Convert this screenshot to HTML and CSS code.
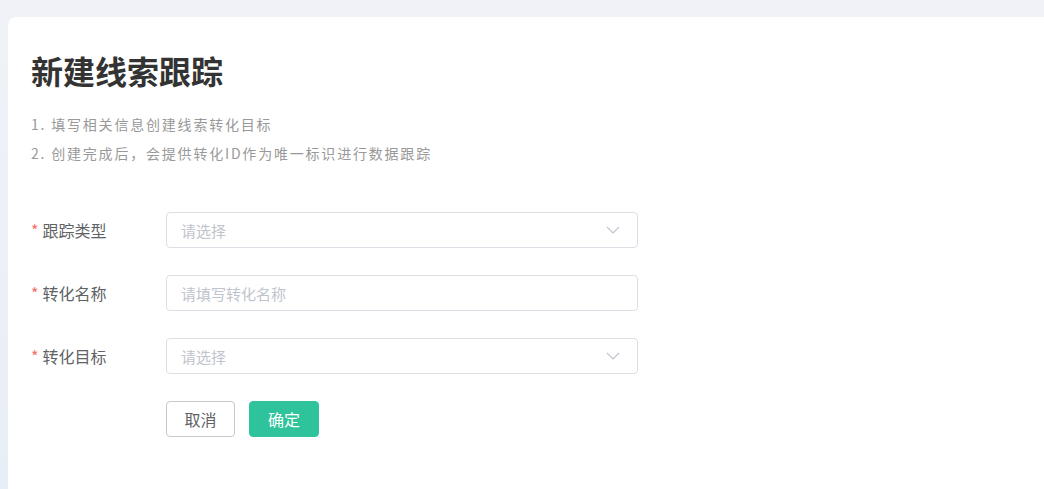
FILE: index.html
```html
<!DOCTYPE html>
<html lang="zh-CN">
<head>
<meta charset="utf-8">
<title>新建线索跟踪</title>
<link rel="stylesheet" href="styles.css">
</head>
<body>
<div class="card">
  <h1 class="title">新建线索跟踪</h1>
  <div class="desc">
    <p>1. 填写相关信息创建线索转化目标</p>
    <p>2. 创建完成后，会提供转化ID作为唯一标识进行数据跟踪</p>
  </div>
  <form class="form">
    <div class="row">
      <label class="label"><span class="req">*</span>跟踪类型</label>
      <div class="control select">
        <span class="placeholder">请选择</span>
        <svg class="arrow" width="14" height="8" viewBox="0 0 14 8"><path d="M1 1l6 6 6-6" fill="none" stroke="#c0c4cc" stroke-width="1.2"/></svg>
      </div>
    </div>
    <div class="row">
      <label class="label"><span class="req">*</span>转化名称</label>
      <div class="control">
        <span class="placeholder">请填写转化名称</span>
      </div>
    </div>
    <div class="row">
      <label class="label"><span class="req">*</span>转化目标</label>
      <div class="control select">
        <span class="placeholder">请选择</span>
        <svg class="arrow" width="14" height="8" viewBox="0 0 14 8"><path d="M1 1l6 6 6-6" fill="none" stroke="#c0c4cc" stroke-width="1.2"/></svg>
      </div>
    </div>
    <div class="row actions">
      <button type="button" class="btn btn-cancel">取消</button>
      <button type="button" class="btn btn-ok">确定</button>
    </div>
  </form>
</div>
</body>
</html>
```

FILE: styles.css
```css
html, body {
  margin: 0;
  height: 100%;
}
body {
  background: linear-gradient(180deg, #f0f2f7 0%, #e8eef7 100%);
  font-family: "Noto Sans CJK SC", "Noto Sans", sans-serif;
  overflow: hidden;
}
.card {
  margin: 17px 0 0 8px;
  height: calc(100% - 17px);
  box-sizing: border-box;
  background: #fff;
  border-radius: 8px 0 0 0;
  padding: 31px 0 0 23px;
}
.title {
  margin: 0;
  font-size: 32px;
  line-height: 44px;
  font-weight: 700;
  color: #333;
}
.desc {
  margin-top: 18px;
  font-size: 14px;
  line-height: 29px;
  letter-spacing: 1.8px;
  color: #999;
}
.desc p {
  margin: 0;
}
.form {
  margin-top: 44px;
  display: flex;
  flex-direction: column;
  gap: 27px;
}
.row {
  display: flex;
  align-items: center;
  height: 36px;
}
.label {
  width: 135px;
  font-size: 16px;
  color: #606266;
}
.req {
  color: #f56c6c;
  margin-right: 4px;
}
.control {
  width: 472px;
  height: 36px;
  box-sizing: border-box;
  border: 1px solid #dcdfe6;
  border-radius: 4px;
  display: flex;
  align-items: center;
  justify-content: space-between;
  padding: 0 17px 0 14px;
}
.placeholder {
  font-size: 15px;
  color: #c0c4cc;
}
.arrow {
  display: block;
}
.actions {
  padding-left: 135px;
  gap: 14px;
}
.btn {
  height: 36px;
  padding: 0 18px;
  font-family: inherit;
  font-size: 16px;
  border-radius: 4px;
  cursor: pointer;
}
.btn-cancel {
  width: 69px;
  padding: 0;
  background: #fff;
  border: 1px solid #c8c9cc;
  color: #606266;
}
.btn-ok {
  background: #2fc39b;
  border: 1px solid #2fc39b;
  color: #fff;
}
```
